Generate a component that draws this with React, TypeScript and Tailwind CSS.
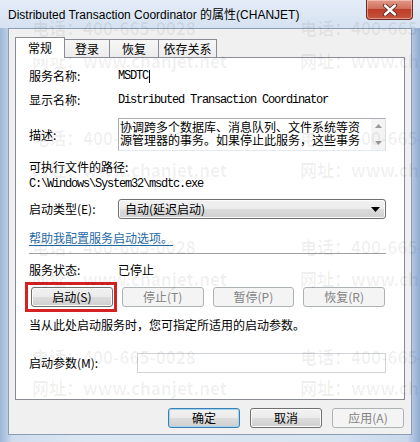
import React from "react";

const CJK = "font-['Noto_Sans_CJK_SC',sans-serif]";
const MONO = "font-['Liberation_Mono','Noto_Sans_CJK_SC',monospace] tracking-[-1.2px]";

function Btn({
  children,
  disabled,
  focused,
  className = "",
}: {
  children: React.ReactNode;
  disabled?: boolean;
  focused?: boolean;
  className?: string;
}) {
  const base =
    "h-[20px] rounded-[3px] border flex items-center justify-center text-[12px] leading-none";
  const style = disabled
    ? "border-[#adb2b5] bg-[#f4f4f4] text-[#838383]"
    : focused
    ? "border-[#3c7fb1] bg-[linear-gradient(#f2f2f2,#ebebeb_50%,#dddddd_50%,#cfcfcf)] shadow-[inset_0_0_0_1px_#9fd5f4] text-black"
    : "border-[#707070] bg-[linear-gradient(#f2f2f2,#ebebeb_50%,#dddddd_50%,#cfcfcf)] shadow-[inset_0_0_0_1px_#fbfbfb] text-black";
  return <div className={`${base} ${style} ${className}`}>{children}</div>;
}

function Watermark() {
  const rows = [0, 1, 2, 3];
  const cls =
    "absolute whitespace-nowrap font-['Noto_Sans_CJK_SC',sans-serif] font-bold text-[17px] leading-[20px] text-black/[0.06] pointer-events-none";
  return (
    <>
      {rows.map((r) => (
        <React.Fragment key={r}>
          <span className={`${cls} left-[32px]`} style={{ top: 18 + r * 109.5 }}>
            电话：400-665-0028
          </span>
          <span className={`${cls} left-[300px]`} style={{ top: 18 + r * 109.5 }}>
            电话：400-665-0028
          </span>
          <span className={`${cls} left-[32px]`} style={{ top: 51 + r * 109 }}>
            网址：www.chanjet.net
          </span>
          <span className={`${cls} left-[300px]`} style={{ top: 51 + r * 109 }}>
            网址：www.chanjet.net
          </span>
        </React.Fragment>
      ))}
    </>
  );
}

export default function App() {
  return (
    <div
      className={`relative w-[420px] h-[442px] overflow-hidden flex flex-col bg-[linear-gradient(90deg,#9db7d6,#cfdcec_3%,#dde7f3_20%,#d9e4f1_80%,#c9d8eb_97%,#8fabd0)] ${CJK} text-black`}
    >
      {/* title bar */}
      <div className="h-[28px] flex items-start justify-between shrink-0 bg-[linear-gradient(#e4ecf7,#d6e2f1)]">
        <span className="ml-[8px] mt-[7px] text-[12px] leading-[16px] font-['Liberation_Sans','Noto_Sans_CJK_SC',sans-serif] whitespace-nowrap">
          Distributed Transaction Coordinator 的属性(CHANJET)
        </span>
        <div className="mr-[7px] w-[47px] h-[20px] rounded-b-[4px] border border-t-0 border-[#6b2a22] bg-[linear-gradient(#e29a88,#cf6f5c_45%,#bb3d2a_50%,#c8553f)] shadow-[inset_0_0_0_1px_rgba(255,220,210,0.5)] flex items-center justify-center">
          <svg width="16" height="12" viewBox="0 0 16 12">
            <path
              d="M3 1.5 L13 10.5 M13 1.5 L3 10.5"
              stroke="#5a2a24"
              strokeWidth="4.2"
              strokeLinecap="round"
            />
            <path
              d="M3 1.5 L13 10.5 M13 1.5 L3 10.5"
              stroke="#ffffff"
              strokeWidth="2.4"
              strokeLinecap="round"
            />
          </svg>
        </div>
      </div>

      {/* client area */}
      <div className="flex-1 mx-[8px] mb-[7px] border border-[#8a9db5] bg-[#f0f0f0] px-[6px] pt-[8px] flex flex-col">
        {/* tabs */}
        <div className="relative z-10 h-[21px] flex items-end text-[12px] leading-none">
          <div className="w-[50px] h-[21px] bg-white border border-b-0 border-[#898c95] flex items-center justify-center pb-[1px]">
            常规
          </div>
          <div className="w-[45px] h-[18px] mb-[1px] border-t border-r border-[#898c95] bg-[linear-gradient(#f7f7f7,#ececec)] flex items-center justify-center">
            登录
          </div>
          <div className="w-[49px] h-[18px] mb-[1px] border-t border-r border-[#898c95] bg-[linear-gradient(#f7f7f7,#ececec)] flex items-center justify-center">
            恢复
          </div>
          <div className="w-[58px] h-[18px] mb-[1px] border-t border-r border-[#898c95] bg-[linear-gradient(#f7f7f7,#ececec)] flex items-center justify-center">
            依存关系
          </div>
        </div>

        {/* panel */}
        <div className="-mt-[1px] h-[343px] border border-[#898c95] bg-white pl-[13px] pr-[18px] text-[12px] flex flex-col">
          <div className="mt-[10px] h-[16px] flex items-center">
            <span className="w-[89px]">服务名称:</span>
            <span className={MONO}>MSDTC</span>
            <span className="w-px h-[13px] bg-black ml-[1px]" />
          </div>
          <div className="mt-[8px] h-[16px] flex items-center">
            <span className="w-[89px]">显示名称:</span>
            <span className={MONO}>Distributed Transaction Coordinator</span>
          </div>
          <div className="mt-[10px] h-[33px] flex items-center">
            <span className="w-[89px]">描述:</span>
            <div className="flex-1 h-[33px] border border-t-[#abadb3] border-l-[#abadb3] border-r-[#dbdfe6] border-b-[#e3e9ef] flex bg-white">
              <div className="flex-1 pl-[1px] pt-[1px] text-[12px] leading-[13px] overflow-hidden">
                <div className="whitespace-nowrap">协调跨多个数据库、消息队列、文件系统等资</div>
                <div className="whitespace-nowrap">源管理器的事务。如果停止此服务，这些事务</div>
              </div>
              <div className="w-[14px] bg-[#f4f4f4] flex flex-col items-center justify-between py-[5px]">
                <svg width="7" height="4" viewBox="0 0 7 4">
                  <path d="M0 4 L3.5 0 L7 4 Z" fill="#9a9a9a" />
                </svg>
                <svg width="7" height="4" viewBox="0 0 7 4">
                  <path d="M0 0 L7 0 L3.5 4 Z" fill="#9a9a9a" />
                </svg>
              </div>
            </div>
          </div>
          <div className="mt-[8px] h-[16px] flex items-center">可执行文件的路径:</div>
          <div className={`mt-[1px] h-[16px] flex items-center ${MONO}`}>
            C:\Windows\System32\msdtc.exe
          </div>
          <div className="mt-[7px] h-[20px] flex items-center">
            <span className="w-[89px]">启动类型(E):</span>
            <div className="flex-1 h-[20px] rounded-[3px] border border-[#707070] bg-[linear-gradient(#f2f2f2,#ebebeb_50%,#dddddd_50%,#cfcfcf)] shadow-[inset_0_0_0_1px_#fbfbfb] flex items-center justify-between pl-[6px] pr-[5px]">
              <span>自动(延迟启动)</span>
              <svg width="9" height="6" viewBox="0 0 9 6">
                <path d="M0 1 L9 1 L4.5 6 Z" fill="#000" />
              </svg>
            </div>
          </div>
          <div className="mt-[11px] h-[16px] flex items-center">
            <span className="text-[#1f6aa5] underline underline-offset-[2px]">帮助我配置服务启动选项。</span>
          </div>
          <div className="mt-[7px] h-px bg-[#a0a0a0]" />
          <div className="mt-[8px] h-[16px] flex items-center">
            <span className="w-[89px]">服务状态:</span>
            <span>已停止</span>
          </div>
          <div className="mt-[9px] ml-[2px] w-[354px] grid grid-cols-4 gap-[9px]">
            <div className="relative">
              <div className="absolute -left-[6px] -right-[4px] -top-[5px] -bottom-[5px] border-[3px] border-[#d42222]" />
              <Btn>启动(S)</Btn>
            </div>
            <Btn disabled>停止(T)</Btn>
            <Btn disabled>暂停(P)</Btn>
            <Btn disabled>恢复(R)</Btn>
          </div>
          <div className="mt-[10px] h-[16px] flex items-center">
            当从此处启动服务时，您可指定所适用的启动参数。
          </div>
          <div className="mt-[20px] h-[20px] flex items-center">
            <span className="w-[108px]">启动参数(M):</span>
            <div className="flex-1 h-[20px] border border-[#cfd2d6] bg-white" />
          </div>
        </div>

        {/* bottom buttons */}
        <div className="mt-[8px] flex justify-end gap-[10px] pr-[1px]">
          <Btn focused className="w-[72px]">确定</Btn>
          <Btn className="w-[72px]">取消</Btn>
          <Btn disabled className="w-[72px]">应用(A)</Btn>
        </div>
      </div>

      <Watermark />
    </div>
  );
}
